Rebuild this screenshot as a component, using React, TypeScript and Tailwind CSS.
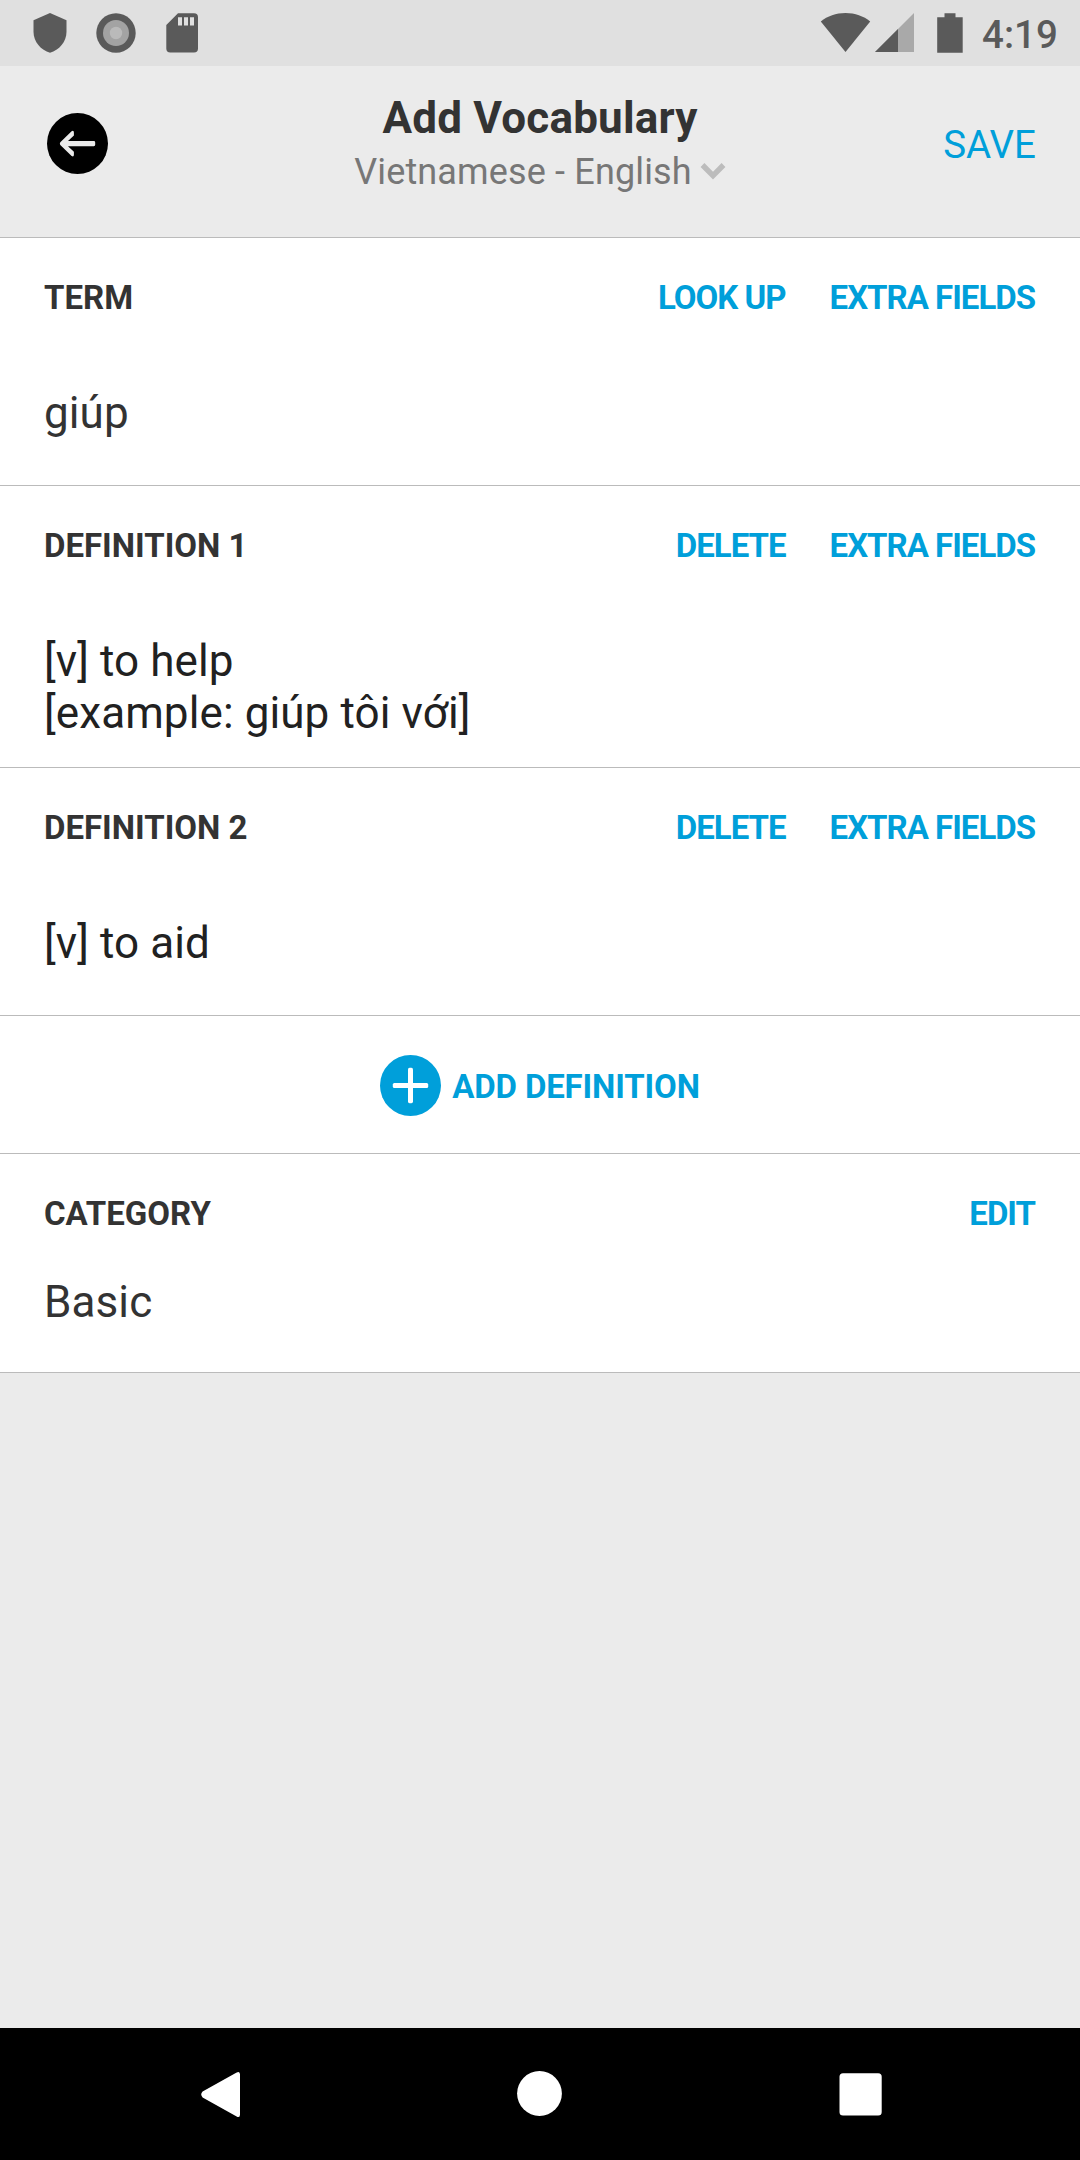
import React from "react";

function StatusBar() {
  return (
    <div className="flex h-[66px] items-center justify-between bg-[#e0e0e0]">
      <svg className="h-[66px] w-[240px]" viewBox="0 0 240 66" fill="#5a5a5a">
        <path d="M50 13 L66.5 20.3 V32 C66.5 41.5 59 50.5 50 52.7 C41 50.5 33.5 41.5 33.5 32 V20.3 Z" />
        <circle cx="116" cy="33" r="19.7" />
        <circle cx="116" cy="33" r="13" fill="#a3a3a3" />
        <circle cx="116" cy="33" r="6.2" fill="#bababa" />
        <path d="M178 13.3 H194 A4 4 0 0 1 198 17.3 V48.5 A4 4 0 0 1 194 52.5 H170.3 A4 4 0 0 1 166.3 48.5 V25 Z" />
        <path d="M178 17.3 h4 v8.2 h-4 z M184 17.3 h4 v8.2 h-4 z M190 17.3 h4 v8.2 h-4 z" fill="#e0e0e0" />
      </svg>
      <div className="flex h-[66px] items-center">
        <svg className="h-[66px] w-[166px]" viewBox="816 0 166 66" fill="#5a5a5a">
          <path d="M845.5 52 L820.8 21.5 C827.5 16 836 13 845.5 13 C855 13 863.5 16 870.2 21.5 Z" />
          <path d="M914 13 V52 H875 Z" fill="#a9a9a9" />
          <path d="M898 29 V52 H875 Z" />
          <path d="M944.5 13.3 h11 v4 h7.2 v35.4 h-25.5 v-35.4 h7.3 z" />
        </svg>
        <span className="w-[98px] pt-1 text-[38.5px] leading-[62px] font-medium text-[#5a5a5a]">4:19</span>
      </div>
    </div>
  );
}

function Header() {
  return (
    <header className="grid h-[172px] grid-cols-[240px_1fr_240px] items-start border-b border-[#bbbbbb] bg-[#ebebeb]">
      <button className="mt-[47px] ml-[47px] h-[61px] w-[61px]">
        <svg className="h-[61px] w-[61px]" viewBox="0 0 61 61">
          <circle cx="30.5" cy="30.5" r="30.5" fill="#000" />
          <path
            d="M13.3 29.2 L24.6 18.2 Q26.9 17 26.9 19.5 V22.4 L21 28 H46.8 Q48.2 28 48.2 29.4 V31.8 Q48.2 33.2 46.8 33.2 H21 L26.9 38.8 V41.7 Q26.9 44.2 24.6 43 L13.3 32 Q12.3 30.6 13.3 29.2 Z"
            fill="#ebebeb"
          />
        </svg>
      </button>
      <div className="flex flex-col items-center pt-[26px]">
        <h1 className="text-[44px] leading-[52px] font-bold tracking-[0.2px] text-[#333333]">Add Vocabulary</h1>
        <div className="mt-[7px] flex items-center">
          <span className="text-[36px] leading-[42px] tracking-[0.15px] text-[#777777]">Vietnamese - English</span>
          <svg className="mb-[3px] ml-[8px] h-[18px] w-[26px]" viewBox="0 0 26 18" fill="none">
            <path d="M2.5 3 L13 13.6 L23.5 3" stroke="#bcbcbc" strokeWidth="5.4" />
          </svg>
        </div>
      </div>
      <button className="mt-[56px] mr-11 text-right text-[38.5px] leading-[46px] text-[#009fda]">SAVE</button>
    </header>
  );
}

type SectionProps = {
  title: string;
  actions: string[];
  className: string;
  children: React.ReactNode;
};

function Section({ title, actions, className, children }: SectionProps) {
  return (
    <section className={`flex flex-col border-b border-[#bbbbbb] bg-white px-11 pt-10 ${className}`}>
      <div className="flex items-center justify-between text-[33px] leading-10 font-bold">
        <h2 className="text-[#333333]">{title}</h2>
        <div className="mr-px flex gap-[44px] tracking-[-1px] text-[#009fda]">
          {actions.map((a) => (
            <button key={a} className="font-bold">{a}</button>
          ))}
        </div>
      </div>
      <div className="text-[44px] leading-[52px] tracking-[0.1px]">{children}</div>
    </section>
  );
}

export default function App() {
  return (
    <div className="flex h-[2160px] w-[1080px] flex-col bg-[#ebebeb] font-['Roboto',sans-serif]">
      <StatusBar />
      <Header />
      <Section title="TERM" actions={["LOOK UP", "EXTRA FIELDS"]} className="h-[248px] gap-[69px] text-[#333333]">
        <p>giúp</p>
      </Section>
      <Section title="DEFINITION 1" actions={["DELETE", "EXTRA FIELDS"]} className="h-[282px] gap-[69px] text-[#212121]">
        <p>[v] to help</p>
        <p>[example: giúp tôi với]</p>
      </Section>
      <Section title="DEFINITION 2" actions={["DELETE", "EXTRA FIELDS"]} className="h-[248px] gap-[69px] text-[#212121]">
        <p>[v] to aid</p>
      </Section>
      <button className="flex h-[138px] items-center justify-center gap-[11px] border-b border-[#bbbbbb] bg-white pt-[2px]">
        <svg className="h-[61px] w-[61px]" viewBox="0 0 61 61">
          <circle cx="30.5" cy="30.5" r="30.5" fill="#009fda" />
          <rect x="28" y="12.8" width="5" height="35.4" rx="1.6" fill="#fff" />
          <rect x="12.8" y="28" width="35.4" height="5" rx="1.6" fill="#fff" />
        </svg>
        <span className="pt-[2px] text-[33px] leading-10 font-bold tracking-[-0.15px] text-[#009fda]">ADD DEFINITION</span>
      </button>
      <Section title="CATEGORY" actions={["EDIT"]} className="h-[219px] gap-[42px] text-[#333333]">
        <p>Basic</p>
      </Section>
      <nav className="mt-auto flex h-[132px] bg-black">
        <svg className="h-[132px] w-[360px]" viewBox="0 0 360 132" fill="#fff">
          <path d="M236.2 44.8 Q240 42.4 240 46.5 V86.5 Q240 90.6 236.2 88.2 L202.6 69.4 Q199.8 66.5 202.6 63.6 Z" />
        </svg>
        <svg className="h-[132px] w-[360px]" viewBox="360 0 360 132" fill="#fff">
          <circle cx="539.5" cy="65.5" r="22.4" />
        </svg>
        <svg className="h-[132px] w-[360px]" viewBox="720 0 360 132" fill="#fff">
          <rect x="839.5" y="45.2" width="42.2" height="42.2" rx="3.5" />
        </svg>
      </nav>
    </div>
  );
}
